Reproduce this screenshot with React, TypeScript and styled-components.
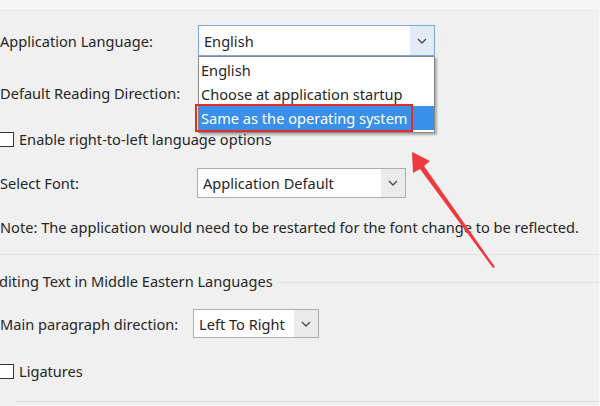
import styled, { createGlobalStyle } from 'styled-components';

const GlobalStyle = createGlobalStyle`
    html, body {
        margin: 0;
        padding: 0;
        background: #f0f0f0;
    }
    body {
        font-family: 'Noto Sans', 'Open Sans', sans-serif;
        font-size: 14.6px;
        color: #262626;
    }
`;

const Page = styled.div`
    position: relative;
    width: 600px;
    height: 406px;
    overflow: hidden;
    background: #f0f0f0;
    border-right: 1px solid #f8f8f8;
    box-sizing: border-box;
`;

const TopStrip = styled.div`
    height: 10px;
    background: #f6f6f6;
    border-bottom: 1px solid #e8e8e8;
`;

const Row = styled.div<{ $top: number; $height: number }>`
    display: flex;
    align-items: center;
    margin-top: ${(p) => p.$top}px;
    height: ${(p) => p.$height}px;
`;

const Label = styled.div<{ $width: number }>`
    width: ${(p) => p.$width}px;
    flex-shrink: 0;
    white-space: nowrap;
`;

const SelectBox = styled.div<{ $width: number; $focused?: boolean }>`
    position: relative;
    display: flex;
    align-items: stretch;
    box-sizing: border-box;
    width: ${(p) => p.$width}px;
    height: 100%;
    background: #fff;
    border: 1px solid ${(p) => (p.$focused ? '#78a8dc' : '#adadad')};
`;

const SelectValue = styled.div<{ $pad: number }>`
    flex: 1;
    display: flex;
    align-items: center;
    padding-left: ${(p) => p.$pad}px;
    white-space: nowrap;
`;

const SelectArrow = styled.div<{ $focused?: boolean }>`
    width: 24px;
    display: flex;
    align-items: center;
    justify-content: center;
    background: ${(p) => (p.$focused ? '#e1ecf8' : '#ebebeb')};
    color: #4a4a4a;
`;

const DropList = styled.div`
    position: absolute;
    top: 56px;
    left: 198px;
    width: 237px;
    box-sizing: border-box;
    padding: 1px 0 2px;
    background: #fff;
    border: 1px solid #8a8a8a;
    box-shadow: 2px 2px 2px rgba(0, 0, 0, 0.28);
    z-index: 2;
`;

const DropItem = styled.div<{ $active?: boolean }>`
    height: 24px;
    display: flex;
    align-items: center;
    padding-left: 2px;
    white-space: nowrap;
    background: ${(p) => (p.$active ? '#3a8fe8' : 'transparent')};
    color: ${(p) => (p.$active ? '#fff' : '#262626')};
`;

const RedBox = styled.div`
    position: absolute;
    top: 104px;
    left: 195px;
    width: 218px;
    height: 28px;
    box-sizing: border-box;
    border: 2px solid #e62b2b;
    z-index: 3;
`;

const CheckRow = styled.div<{ $top: number }>`
    display: flex;
    align-items: center;
    gap: 5px;
    margin-top: ${(p) => p.$top}px;
    margin-left: -1px;
    height: 16px;
`;

const Box = styled.div`
    width: 15px;
    height: 15px;
    box-sizing: border-box;
    background: #fff;
    border: 1px solid #333;
`;

const Note = styled.div`
    margin-top: 19px;
    height: 20px;
    line-height: 20px;
    white-space: nowrap;
`;

const Divider = styled.div`
    margin-top: 17px;
    height: 1px;
    background: #e2e2e2;
`;

const GroupHeading = styled.div`
    display: flex;
    align-items: center;
    gap: 4px;
    margin-top: 16px;
    height: 20px;
`;

const HeadingText = styled.span`
    margin-left: -9px;
    white-space: nowrap;
`;

const HeadingLine = styled.div`
    flex: 1;
    height: 1px;
    margin-top: 2px;
    background: #e2e2e2;
`;

const BottomLine = styled.div`
    margin-top: 22px;
    margin-left: 15px;
    height: 1px;
    background: #dcdcdc;
`;

const ArrowLayer = styled.svg`
    position: absolute;
    inset: 0;
    z-index: 4;
    pointer-events: none;
`;

const Chevron = () => (
    <svg width="10" height="6" viewBox="0 0 10 6">
        <path d="M1 1l4 4 4-4" fill="none" stroke="currentColor" strokeWidth="1.4" />
    </svg>
);

interface SelectProps {
    value: string;
    width: number;
    pad?: number;
    focused?: boolean;
}

const Select = ({ value, width, pad = 5, focused }: SelectProps) => (
    <SelectBox $width={width} $focused={focused}>
        <SelectValue $pad={pad}>{value}</SelectValue>
        <SelectArrow $focused={focused}>
            <Chevron />
        </SelectArrow>
    </SelectBox>
);

export default function App() {
    return (
        <>
            <GlobalStyle />
            <Page>
                <TopStrip />
                <Row $top={14} $height={31}>
                    <Label $width={198}>Application Language:</Label>
                    <Select value="English" width={237} focused />
                </Row>
                <Row $top={21} $height={31}>
                    <Label $width={198}>Default Reading Direction:</Label>
                    {/* hidden under the open list */}
                    <Select value="" width={200} />
                </Row>
                <CheckRow $top={23}>
                    <Box />
                    <span>Enable right-to-left language options</span>
                </CheckRow>
                <Row $top={21} $height={30}>
                    <Label $width={197}>Select Font:</Label>
                    <Select value="Application Default" width={209} />
                </Row>
                <Note>
                    Note: The application would need to be restarted for the font change to be
                    reflected.
                </Note>
                <Divider />
                <GroupHeading>
                    <HeadingText>Editing Text in Middle Eastern Languages</HeadingText>
                    <HeadingLine />
                </GroupHeading>
                <Row $top={18} $height={29}>
                    <Label $width={193}>Main paragraph direction:</Label>
                    <Select value="Left To Right" width={126} />
                </Row>
                <CheckRow $top={25}>
                    <Box />
                    <span>Ligatures</span>
                </CheckRow>
                <BottomLine />

                <DropList>
                    <DropItem>English</DropItem>
                    <DropItem>Choose at application startup</DropItem>
                    <DropItem $active>Same as the operating system</DropItem>
                </DropList>
                <RedBox />

                <ArrowLayer width="600" height="406" viewBox="0 0 600 406">
                    <polygon
                        points="412,152 430,161 424,166 495,267 493,268 420,169 413,173"
                        fill="#ee3a3f"
                    />
                </ArrowLayer>
            </Page>
        </>
    );
}
